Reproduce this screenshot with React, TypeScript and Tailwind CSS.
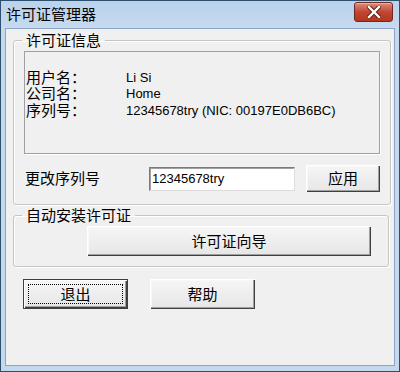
import { ReactNode } from "react"

const font = "font-['Liberation_Sans','Noto_Sans_CJK_SC',sans-serif]"

function Button({ children, className = "", isDefault = false }: { children: ReactNode; className?: string; isDefault?: boolean }) {
	return (
		<button
			className={`flex items-center justify-center bg-gradient-to-b from-[#f6f6f6] to-[#e6e6e6] text-[15px] leading-none text-black ${
				isDefault
					? "border border-[#404040] shadow-[inset_1px_1px_0_#fff,inset_-1px_-1px_0_#404040,inset_-2px_-2px_0_#a0a0a0]"
					: "shadow-[inset_1px_1px_0_#fff,inset_-1px_-1px_0_#404040,inset_-2px_-2px_0_#a0a0a0,inset_2px_2px_0_#f8f8f8]"
			} ${className}`}
		>
			{isDefault ? (
				<span className="flex h-[calc(100%-8px)] w-[calc(100%-8px)] items-center justify-center border border-dotted border-black">
					{children}
				</span>
			) : (
				children
			)}
		</button>
	)
}

function Group({ title, children, className = "" }: { title: string; children: ReactNode; className?: string }) {
	return (
		<fieldset
			className={`mx-[7px] rounded-[3px] border border-[#c6c6c6] px-0 shadow-[inset_1px_1px_0_#fff,1px_1px_0_#fff] ${className}`}
		>
			<legend className="ml-[8px] px-[4px] text-[15px] leading-[15px] text-black">{title}</legend>
			{children}
		</fieldset>
	)
}

export default function App() {
	return (
		<div className={`${font} flex h-[372px] w-[400px] flex-col border border-[#2f4f6f] bg-[#c4d8ee]`}>
			<div className="flex h-[27px] items-start justify-between bg-gradient-to-b from-[#bad2ec] to-[#c7daef] pl-[5px] pr-[6px]">
				<span className="mt-[6px] text-[15px] leading-[16px] text-black">许可证管理器</span>
				<div className="mt-[1px] flex h-[20px] w-[39px] items-center justify-center rounded-[3px] border border-[#6d2a22] bg-gradient-to-b from-[#dc8c7c] via-[#c2452f] to-[#b23822] shadow-[inset_0_1px_0_#eeb0a3]">
					<svg width="14" height="12" viewBox="0 0 14 12">
						<path d="M2 1 L12 11 M12 1 L2 11" stroke="#5b1a12" strokeWidth="4.2" strokeLinecap="square" />
						<path d="M2 1 L12 11 M12 1 L2 11" stroke="#ffffff" strokeWidth="2.4" strokeLinecap="square" />
					</svg>
				</div>
			</div>
			<div className="mx-[4px] mb-[5px] flex flex-1 flex-col border border-[#8ba6c4] bg-[#f0f0f0]">
				<Group title="许可证信息" className="mt-[4px] pb-[12px]">
					<div className="px-[10px]">
						<div className="mt-[3px] h-[103px] border border-[#a0a0a0] pl-[1px] pt-[17px] shadow-[1px_1px_0_#fff]">
							{[
								["用户名：", "Li Si"],
								["公司名：", "Home"],
								["序列号：", "12345678try (NIC: 00197E0DB6BC)"],
							].map(([label, value]) => (
								<div key={label} className="flex h-[16.5px] items-center">
									<span className="w-[100px] text-[15px] leading-none text-black">{label}</span>
									<span className="text-[13px] leading-none text-black">{value}</span>
								</div>
							))}
						</div>
						<div className="mt-[11px] flex items-center pl-[1px]">
							<span className="w-[124px] text-[15px] leading-none text-black">更改序列号</span>
							<div className="flex h-[24px] w-[146px] items-center border border-[#7a7a7a] border-b-[#dcdcdc] border-r-[#dcdcdc] bg-white pl-[2px] text-[13px] text-black shadow-[inset_1px_1px_0_#a0a0a0]">
								12345678try
							</div>
							<Button className="ml-[11px] h-[27px] w-[74px]">应用</Button>
						</div>
					</div>
				</Group>
				<Group title="自动安装许可证" className="mt-[3px] pb-[10px]">
					<div className="pl-[73px] pr-[17px]">
						<Button className="mt-[3px] h-[30px] w-[284px]">许可证向导</Button>
					</div>
				</Group>
				<div className="ml-[17px] mt-[12px] flex gap-[22px]">
					<Button isDefault className="h-[30px] w-[105px]">
						退出
					</Button>
					<Button className="h-[30px] w-[105px]">帮助</Button>
				</div>
			</div>
		</div>
	)
}
